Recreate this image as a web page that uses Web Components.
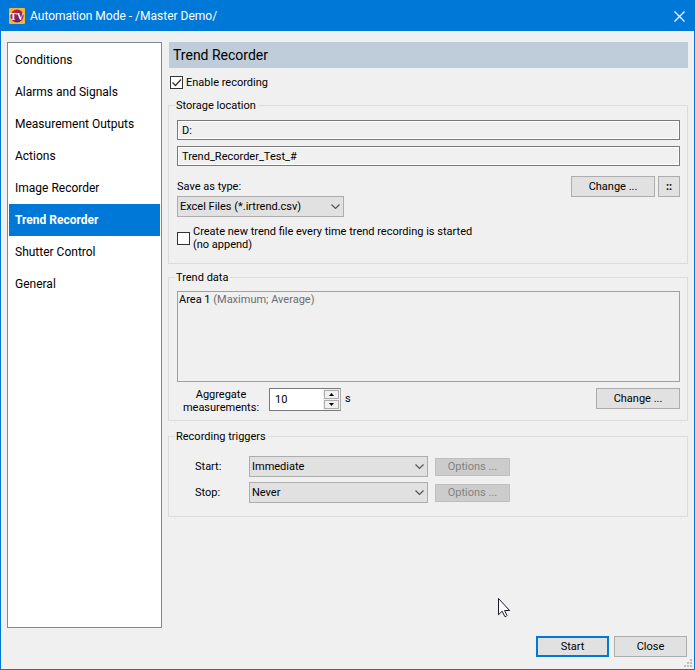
<!DOCTYPE html>
<html lang="en">
<head>
<meta charset="utf-8">
<title>Automation Mode</title>
<style>
    body {
        margin: 0;
        font: 11px/13px Roboto, "Liberation Sans", sans-serif;
        color: #000;
        --accent: #0078d7;
        --face: #f0f0f0;
        --button: #e1e1e1;
        --button-border: #adadad;
        --group-border: #dcdcdc;
        --field-border: #7a7a7a;
    }
</style>
</head>
<body>
<app-window>
    <title-bar slot="title">Automation Mode - /Master Demo/</title-bar>
    <nav-list slot="nav" items="Conditions|Alarms and Signals|Measurement Outputs|Actions|Image Recorder|Trend Recorder|Shutter Control|General" current="Trend Recorder"></nav-list>
    <recorder-page></recorder-page>
    <push-button slot="actions" size="large" primary>Start</push-button>
    <push-button slot="actions" size="large">Close</push-button>
</app-window>
<mouse-pointer></mouse-pointer>

<script>
class AppWindow extends HTMLElement {
    constructor() {
        super();
        this.attachShadow({ mode: 'open' });
    }

    connectedCallback() {
        this.shadowRoot.innerHTML = `
            <style>
                :host {
                    display: flex;
                    flex-direction: column;
                    box-sizing: border-box;
                    min-height: 100vh;
                    border: 1px solid var(--accent);
                    background: var(--face);
                }
                .content {
                    flex: 1;
                    display: grid;
                    grid-template-columns: 155px 1fr;
                    gap: 6px;
                    padding: 11px 6px 0;
                }
                footer {
                    position: relative;
                    display: flex;
                    justify-content: flex-end;
                    gap: 5px;
                    padding: 8px 7px 12px;
                }
                .grip {
                    position: absolute;
                    right: 2px;
                    bottom: 2px;
                    fill: #bfbfbf;
                }
            </style>
            <slot name="title"></slot>
            <div class="content">
                <slot name="nav"></slot>
                <main><slot></slot></main>
            </div>
            <footer>
                <slot name="actions"></slot>
                <svg class="grip" width="8" height="8" aria-hidden="true">
                    <path d="M6 0h2v2h-2zM3 3h2v2h-2zM6 3h2v2h-2zM0 6h2v2h-2zM3 6h2v2h-2zM6 6h2v2h-2z"/>
                </svg>
            </footer>
        `;
    }
}

class TitleBar extends HTMLElement {
    constructor() {
        super();
        this.attachShadow({ mode: 'open' });
    }

    connectedCallback() {
        this.shadowRoot.innerHTML = `
            <style>
                :host {
                    display: flex;
                    align-items: center;
                    height: 30px;
                    padding-left: 8px;
                    background: var(--accent);
                    color: #fff;
                }
                h1 {
                    flex: 1;
                    margin: 0 0 0 5px;
                    font-size: 12px;
                    font-weight: 400;
                    line-height: 16px;
                }
                button {
                    display: grid;
                    place-items: center;
                    width: 30px;
                    height: 30px;
                    padding: 0;
                    border: 0;
                    background: none;
                }
            </style>
            <svg width="16" height="16" viewBox="0 0 16 16" aria-hidden="true">
                <defs>
                    <linearGradient id="heat" x2="1" y2="1">
                        <stop offset="0" stop-color="#d8302a"/>
                        <stop offset=".5" stop-color="#8a2060"/>
                        <stop offset="1" stop-color="#3a2a90"/>
                    </linearGradient>
                </defs>
                <rect width="16" height="16" rx="1" fill="#f9b233"/>
                <circle cx="8" cy="8" r="6.5" fill="url(#heat)"/>
                <text x="8" y="12" text-anchor="middle" font-family="Liberation Serif, serif" font-size="10" font-weight="700" fill="#fff">TV</text>
            </svg>
            <h1><slot></slot></h1>
            <button type="button" aria-label="Close window">
                <svg width="11" height="11" viewBox="0 0 11 11" stroke="#fff" stroke-width="1.2" fill="none">
                    <path d="M.5.5l10 10M10.5.5l-10 10"/>
                </svg>
            </button>
        `;
    }
}

class NavList extends HTMLElement {
    constructor() {
        super();
        this.attachShadow({ mode: 'open' });
    }

    connectedCallback() {
        const current = this.getAttribute('current');
        const links = this.getAttribute('items').split('|').map(name => `
            <a href="#${name.toLowerCase().replace(/ /g, '-')}" ${name === current ? 'aria-current="page"' : ''}>${name}</a>
        `).join('');

        this.shadowRoot.innerHTML = `
            <style>
                :host {
                    display: block;
                    box-sizing: border-box;
                    padding: 1px;
                    border: 1px solid #828790;
                    background: #fff;
                }
                a {
                    display: block;
                    padding: 0 6px;
                    font-size: 12px;
                    line-height: 32px;
                    color: inherit;
                    text-decoration: none;
                }
                a[aria-current] {
                    background: var(--accent);
                    color: #fff;
                    font-weight: 700;
                }
            </style>
            <nav>${links}</nav>
        `;
    }
}

class GroupBox extends HTMLElement {
    constructor() {
        super();
        this.attachShadow({ mode: 'open' });
    }

    connectedCallback() {
        this.shadowRoot.innerHTML = `
            <style>
                :host {
                    display: block;
                }
                fieldset {
                    min-width: 0;
                    margin: 0;
                    padding: 7px 7px 6px 8px;
                    border: 1px solid var(--group-border);
                }
                legend {
                    margin-left: -2px;
                    padding: 0 2px 0 1px;
                }
            </style>
            <fieldset>
                <legend>${this.getAttribute('label')}</legend>
                <slot></slot>
            </fieldset>
        `;
    }
}

class PathField extends HTMLElement {
    constructor() {
        super();
        this.attachShadow({ mode: 'open' });
    }

    connectedCallback() {
        this.shadowRoot.innerHTML = `
            <style>
                :host {
                    display: block;
                }
                input {
                    display: block;
                    box-sizing: border-box;
                    width: 100%;
                    height: 20px;
                    padding: 0 4px;
                    border: 1px solid var(--field-border);
                    box-shadow: inset 0 0 0 1px #fff;
                    background: var(--face);
                    font: inherit;
                    color: inherit;
                }
            </style>
            <input type="text" readonly aria-label="${this.getAttribute('label')}" value="${this.getAttribute('value')}">
        `;
    }
}

class CheckField extends HTMLElement {
    constructor() {
        super();
        this.attachShadow({ mode: 'open' });
    }

    connectedCallback() {
        this.shadowRoot.innerHTML = `
            <style>
                :host {
                    display: block;
                }
                label {
                    display: flex;
                    align-items: center;
                    gap: 3px;
                }
                .box {
                    display: grid;
                }
                .box > * {
                    grid-area: 1 / 1;
                }
                input {
                    appearance: none;
                    box-sizing: border-box;
                    width: 13px;
                    height: 13px;
                    margin: 0;
                    border: 1px solid #333;
                    background: #fff;
                }
                svg {
                    visibility: hidden;
                    pointer-events: none;
                }
                input:checked + svg {
                    visibility: visible;
                }
            </style>
            <label>
                <span class="box">
                    <input type="checkbox" ${this.hasAttribute('checked') ? 'checked' : ''}>
                    <svg width="13" height="13" fill="none" stroke="#333" stroke-width="1.3" aria-hidden="true">
                        <path d="M2.5 6.5l3 3l5.5-6"/>
                    </svg>
                </span>
                <span><slot></slot></span>
            </label>
        `;
    }
}

class SelectField extends HTMLElement {
    constructor() {
        super();
        this.attachShadow({ mode: 'open' });
    }

    connectedCallback() {
        this.shadowRoot.innerHTML = `
            <style>
                :host {
                    display: block;
                }
                label {
                    display: block;
                    margin-bottom: 3px;
                }
                .control {
                    display: grid;
                    align-items: center;
                }
                .control > * {
                    grid-area: 1 / 1;
                }
                select {
                    appearance: none;
                    box-sizing: border-box;
                    width: 100%;
                    height: 21px;
                    padding: 0 22px 0 2px;
                    border: 1px solid var(--button-border);
                    border-radius: 0;
                    background: var(--button);
                    font: inherit;
                    color: inherit;
                }
                svg {
                    justify-self: end;
                    margin-right: 4px;
                    pointer-events: none;
                }
                :host([inline]) {
                    display: grid;
                    grid-template-columns: 72px 179px;
                    align-items: center;
                }
                :host([inline]) label {
                    margin: 0;
                    padding-left: 18px;
                }
            </style>
            <label for="choice">${this.getAttribute('label')}</label>
            <div class="control">
                <select id="choice"><option>${this.getAttribute('value')}</option></select>
                <svg width="9" height="6" fill="none" stroke="#555" stroke-width="1.2" aria-hidden="true">
                    <path d="M.5.5l4 4l4-4"/>
                </svg>
            </div>
        `;
    }
}

class SpinField extends HTMLElement {
    constructor() {
        super();
        this.attachShadow({ mode: 'open' });
    }

    connectedCallback() {
        this.shadowRoot.innerHTML = `
            <style>
                :host {
                    display: flex;
                    align-items: flex-start;
                }
                label {
                    width: 88px;
                    margin-right: 4px;
                    text-align: center;
                }
                .control {
                    display: flex;
                    box-sizing: border-box;
                    width: 72px;
                    height: 23px;
                    margin-right: 4px;
                    border: 1px solid var(--field-border);
                    border-right-color: var(--button-border);
                    background: #fff;
                }
                input {
                    flex: 1;
                    min-width: 0;
                    padding: 0 5px;
                    border: 0;
                    background: none;
                    font: inherit;
                    color: inherit;
                }
                .steps {
                    display: grid;
                    width: 15px;
                    gap: 1px;
                    padding: 1px;
                    background: var(--face);
                }
                button {
                    display: grid;
                    place-items: center;
                    padding: 0;
                    border: 1px solid var(--button-border);
                    background: var(--face);
                }
                .unit {
                    line-height: 21px;
                }
            </style>
            <label for="amount">Aggregate measurements:</label>
            <div class="control">
                <input id="amount" type="text" inputmode="numeric" value="${this.getAttribute('value')}">
                <span class="steps">
                    <button type="button" aria-label="Increase"><svg width="5" height="3"><path d="M0 3L2.5 0L5 3z"/></svg></button>
                    <button type="button" aria-label="Decrease"><svg width="5" height="3"><path d="M0 0L2.5 3L5 0z"/></svg></button>
                </span>
            </div>
            <span class="unit">${this.getAttribute('unit')}</span>
        `;
    }
}

class PushButton extends HTMLElement {
    constructor() {
        super();
        this.attachShadow({ mode: 'open' });
    }

    connectedCallback() {
        this.shadowRoot.innerHTML = `
            <style>
                :host {
                    display: block;
                    width: 84px;
                }
                :host([size="tiny"]) { width: 22px; }
                :host([size="small"]) { width: 75px; }
                :host([size="large"]) { width: 73px; }
                button {
                    display: block;
                    width: 100%;
                    height: 21px;
                    padding: 0;
                    border: 1px solid var(--button-border);
                    background: var(--button);
                    font: inherit;
                    color: inherit;
                }
                :host([size="tiny"]) button {
                    font-weight: 700;
                }
                :host([size="small"]) button {
                    height: 18px;
                }
                :host([primary]) button {
                    border: 2px solid var(--accent);
                }
                button:disabled {
                    border-color: #bfbfbf;
                    background: #ccc;
                    color: #838383;
                }
            </style>
            <button type="button" ${this.hasAttribute('disabled') ? 'disabled' : ''}><slot></slot></button>
        `;
    }
}

class RecorderPage extends HTMLElement {
    constructor() {
        super();
        this.attachShadow({ mode: 'open' });
    }

    connectedCallback() {
        this.shadowRoot.innerHTML = `
            <style>
                :host {
                    display: block;
                }
                h2 {
                    margin: 0 0 8px 1px;
                    padding: 0 4px;
                    background: #bfcddb;
                    font-size: 14px;
                    font-weight: 400;
                    line-height: 26px;
                }
                .enable {
                    margin: 0 0 10px 2px;
                }
                .paths {
                    display: grid;
                    gap: 6px;
                    padding: 1px 0 10px;
                }
                .row {
                    display: flex;
                    justify-content: space-between;
                    align-items: flex-start;
                }
                .buttons {
                    display: flex;
                    gap: 3px;
                }
                .type {
                    width: 167px;
                    padding-top: 4px;
                }
                .append {
                    padding: 8px 0 6px;
                }
                .storage {
                    margin-bottom: 7px;
                }
                ul {
                    box-sizing: border-box;
                    min-height: 91px;
                    margin: 0 0 6px;
                    padding: 1px;
                    border: 1px solid #a0a0a0;
                    list-style: none;
                }
                small {
                    font-size: inherit;
                    color: #6d6d6d;
                }
                .data {
                    margin-bottom: 9px;
                }
                .triggers {
                    display: grid;
                    gap: 5px;
                    padding: 6px 0 7px;
                }
                .trigger {
                    display: flex;
                    gap: 7px;
                    align-items: center;
                }
            </style>
            <h2>Trend Recorder</h2>
            <check-field class="enable" checked>Enable recording</check-field>
            <group-box class="storage" label="Storage location">
                <div class="paths">
                    <path-field label="Folder" value="D:"></path-field>
                    <path-field label="File name" value="Trend_Recorder_Test_#"></path-field>
                </div>
                <div class="row">
                    <select-field class="type" label="Save as type:" value="Excel Files (*.irtrend.csv)"></select-field>
                    <div class="buttons">
                        <push-button>Change ...</push-button>
                        <push-button size="tiny">::</push-button>
                    </div>
                </div>
                <check-field class="append">Create new trend file every time trend recording is started<br>(no append)</check-field>
            </group-box>
            <group-box class="data" label="Trend data">
                <ul>
                    <li>Area 1 <small>(Maximum; Average)</small></li>
                </ul>
                <div class="row">
                    <spin-field value="10" unit="s"></spin-field>
                    <push-button>Change ...</push-button>
                </div>
            </group-box>
            <group-box label="Recording triggers">
                <div class="triggers">
                    <div class="trigger">
                        <select-field inline label="Start:" value="Immediate"></select-field>
                        <push-button size="small" disabled>Options ...</push-button>
                    </div>
                    <div class="trigger">
                        <select-field inline label="Stop:" value="Never"></select-field>
                        <push-button size="small" disabled>Options ...</push-button>
                    </div>
                </div>
            </group-box>
        `;
    }
}

// pointer floats over the window
class MousePointer extends HTMLElement {
    constructor() {
        super();
        this.attachShadow({ mode: 'open' });
    }

    connectedCallback() {
        this.shadowRoot.innerHTML = `
            <style>
                :host {
                    position: absolute;
                    left: 498px;
                    top: 598px;
                    pointer-events: none;
                }
                svg {
                    display: block;
                }
            </style>
            <svg width="13" height="20" fill="#fff" stroke="#1a1a2a" aria-hidden="true">
                <path d="M.5.5v16.2l3.7-3.5l2.6 5.3q1.6.3 2.2-1l-2.4-5h5z"/>
            </svg>
        `;
    }
}

customElements.define('app-window', AppWindow);
customElements.define('title-bar', TitleBar);
customElements.define('nav-list', NavList);
customElements.define('group-box', GroupBox);
customElements.define('path-field', PathField);
customElements.define('check-field', CheckField);
customElements.define('select-field', SelectField);
customElements.define('spin-field', SpinField);
customElements.define('push-button', PushButton);
customElements.define('recorder-page', RecorderPage);
customElements.define('mouse-pointer', MousePointer);
</script>
</body>
</html>
